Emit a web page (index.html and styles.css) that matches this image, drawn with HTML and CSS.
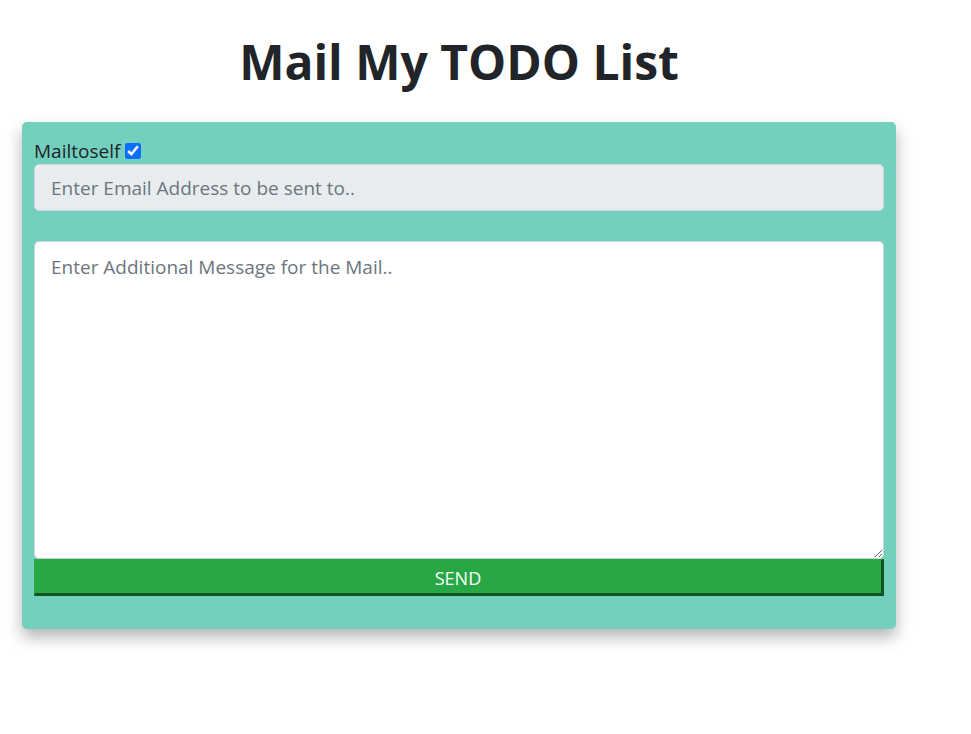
FILE: index.html
```html
<!DOCTYPE html>
<html>
<head>
<meta charset="utf-8">
<link rel="stylesheet" href="styles.css">
</head>
<body>
<div class="page">
  <h1 class="title">Mail My TODO List</h1>
  <form class="card">
    <label class="self">Mailtoself <input type="checkbox" class="check" checked></label>
    <input type="email" class="email" placeholder="Enter Email Address to be sent to.." readonly>
    <textarea class="message" placeholder="Enter Additional Message for the Mail.."></textarea>
    <button type="button" class="send">SEND</button>
  </form>
</div>
</body>
</html>
```

FILE: styles.css
```css
html, body { margin: 0; padding: 0; background: #fff; }
body { font-family: "Open Sans", "Noto Sans", sans-serif; color: #212529; min-height: 734px; }
.page { width: 874px; margin-left: 22px; padding-top: 24px; padding-bottom: 80px; }
.title {
  margin: 0 0 22px;
  text-align: center;
  font-size: 48px;
  font-weight: 700;
  line-height: 76px;
  letter-spacing: 0;
}
.card {
  display: flex;
  flex-direction: column;
  background: #73cfbe;
  border-radius: 5px;
  padding: 16px 12px 33px;
  box-shadow: 0 8px 16px rgba(0,0,0,0.3);
}
.self {
  display: flex;
  align-items: center;
  gap: 5px;
  font-size: 19px;
  line-height: 26px;
  color: #212529;
}
.check { margin: 0; width: 16px; height: 16px; accent-color: #0d6efd; }
.email {
  box-sizing: border-box;
  height: 47px;
  margin: 0 0 30px;
  padding: 8px 16px;
  font-family: inherit;
  font-size: 19px;
  color: #495057;
  background: #e9ecef;
  border: 1px solid #ced4da;
  border-radius: 5px;
  outline: none;
}
.email::placeholder, .message::placeholder { color: #6c757d; }
.message {
  box-sizing: border-box;
  height: 318px;
  margin: 0;
  padding: 12px 16px;
  font-family: inherit;
  font-size: 19px;
  line-height: 26px;
  background: #fff;
  border: 1px solid #ced4da;
  border-radius: 5px;
  resize: vertical;
  outline: none;
}
.send {
  box-sizing: border-box;
  height: 37px;
  margin: 0;
  padding: 2px 0 0;
  font-family: inherit;
  font-size: 18px;
  color: #fff;
  background: #28a745;
  border-style: solid;
  border-width: 1px 3px 3px 1px;
  border-color: #28a745 #12531f #12531f #28a745;
  cursor: pointer;
}
```
